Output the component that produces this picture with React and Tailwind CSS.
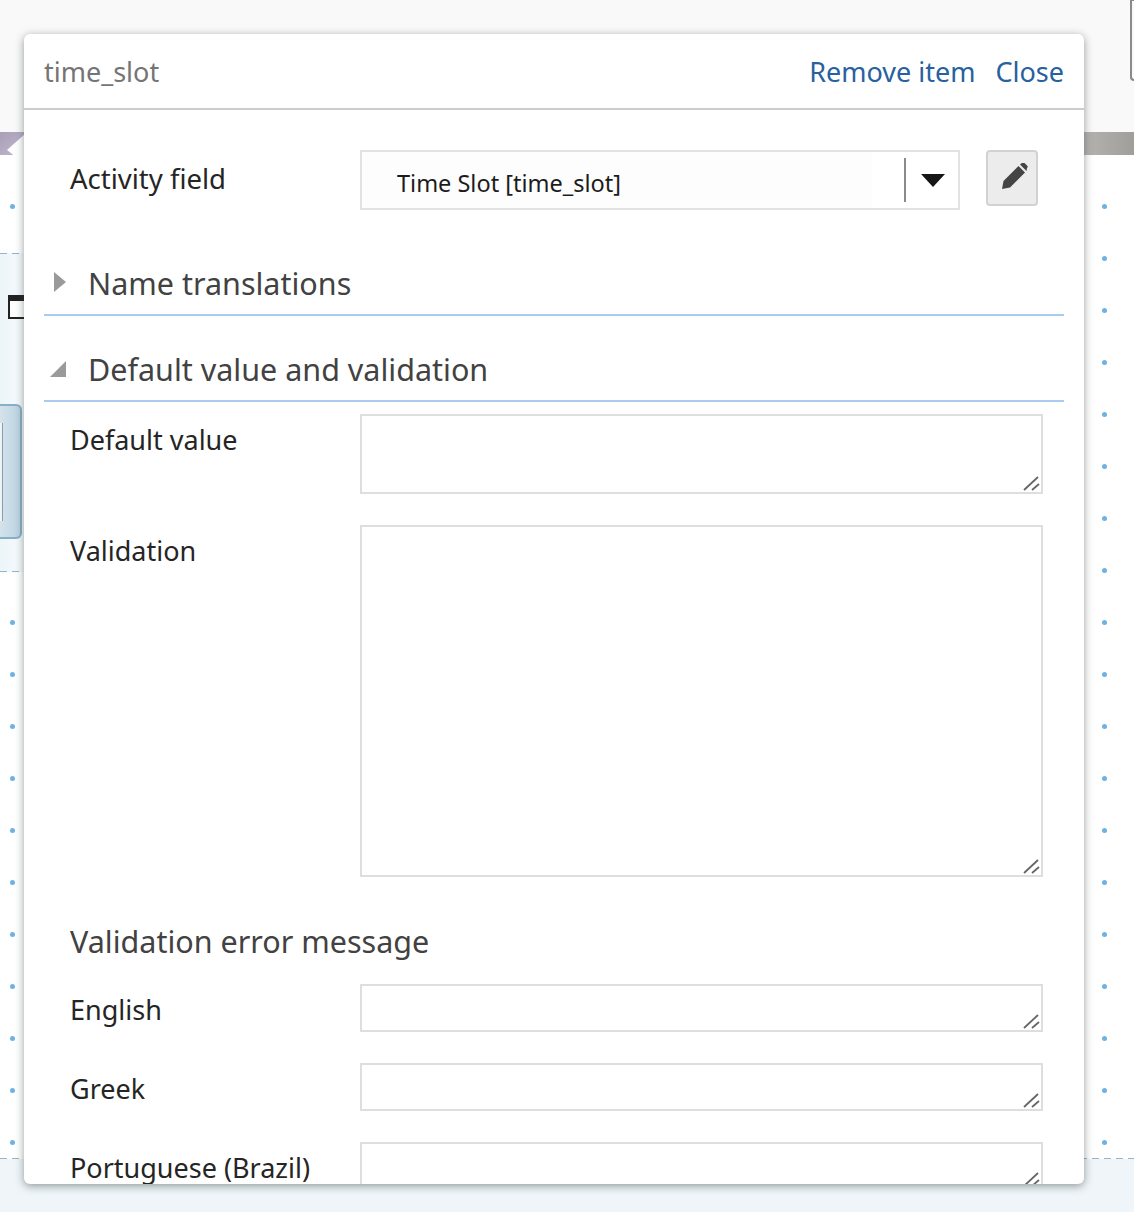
import React from 'react';

const font = "font-['Noto_Sans',sans-serif]";
const dash = 'h-[1px] bg-[repeating-linear-gradient(90deg,#8fb6cc_0_7px,transparent_7px_12px)]';
const dotRows = Array.from({ length: 19 }, (_, i) => i);

const Grip = () => (
  <svg className="absolute right-[1px] bottom-[1px] pointer-events-none" width="18" height="18" viewBox="0 0 18 18">
    <path d="M2 17 L16 4" stroke="#666" strokeWidth="1.8" />
    <path d="M10 17 L17 11" stroke="#666" strokeWidth="1.8" />
  </svg>
);

const Area = ({ className }) => (
  <div className={`relative w-[683px] shrink-0 border-2 border-[#dedede] bg-white ${className}`}>
    <textarea className="block w-full h-full resize-none outline-none" readOnly />
    <Grip />
  </div>
);

const Row = ({ label, boxClass, labelClass, className }) => (
  <div className={`flex items-start pl-[46px] ${className}`}>
    <div className={`w-[290px] shrink-0 text-[27px] leading-[40px] text-[#252525] ${labelClass}`}>{label}</div>
    <Area className={boxClass} />
  </div>
);

const Section = ({ title, open, className }) => (
  <div className={`relative flex items-center h-[60px] pl-[44px] pb-[4px] border-b-2 border-[#a8cbee] ${className}`}>
    {open ? (
      <svg className="absolute left-[6px] top-[19px]" width="16" height="16" viewBox="0 0 16 16">
        <path d="M0 16 L16 16 L16 0 Z" fill="#9a9a9a" />
      </svg>
    ) : (
      <svg className="absolute left-[10px] top-[16px]" width="12" height="20" viewBox="0 0 12 20">
        <path d="M0 0 L12 10 L0 20 Z" fill="#9a9a9a" />
      </svg>
    )}
    <span className="text-[30.5px] leading-[40px] text-[#424242]">{title}</span>
  </div>
);

const Dots = ({ rows, className }) => (
  <div className={`absolute ${className}`}>
    {rows.map((i) => (
      <div key={i} className="h-[52px]">
        <div className="w-[5px] h-[5px] rounded-full bg-[#6fb2e0]" />
      </div>
    ))}
  </div>
);

export default function App() {
  return (
    <div className={`relative w-[1134px] h-[1212px] overflow-hidden bg-white ${font}`}>
      {/* page behind the popup */}
      <div className="flex flex-col h-full">
        <div className="h-[132px] bg-[#f9f9f9] flex justify-end">
          <div className="w-[4px] h-[82px] mt-[-1px] border-2 border-r-0 border-[#8a8a8a] rounded-bl-[6px]" />
        </div>
        <div className="h-[23px] flex justify-between">
          <div className="w-[24px] bg-gradient-to-br from-[#a7a0b4] to-[#c4b8d4]" />
          <div className="w-[50px] bg-gradient-to-r from-[#b5b3b0] to-[#a09e9b]" />
        </div>
        <div className="h-[98px]" />
        <div className="h-[319px] w-[24px] flex flex-col bg-gradient-to-r from-[#edf5fa] to-[#f6fafc]">
          <div className={dash} />
          <div className="ml-[8px] mt-[41px] w-[18px] h-[24px] border-2 border-t-[6px] border-[#222] bg-white" />
          <div className="mt-[85px] w-[22px] h-[135px] rounded-r-[6px] border-2 border-l-0 border-[#86afc8] bg-gradient-to-r from-[#d3e3ec] to-[#bcd3e0] flex items-center">
            <div className="w-[3px] h-[98px] border-r border-[#8a9ba8] bg-[#eef3f6]" />
          </div>
          <div className={`mt-auto ${dash}`} />
        </div>
        <div className="h-[586px]" />
        <div className={dash} />
        <div className="flex-1 bg-[#eff5f8]" />
      </div>

      {/* dot grid along both edges */}
      <Dots rows={dotRows.slice(0, 1)} className="left-[10px] top-[204px]" />
      <Dots rows={dotRows.slice(8)} className="left-[10px] top-[620px]" />
      <Dots rows={dotRows} className="left-[1102px] top-[204px]" />

      {/* arrow of the popup */}
      <svg className="absolute left-[7px] top-[134px]" width="18" height="30" viewBox="0 0 18 30">
        <path d="M0 16 L18 0 L18 30 Z" fill="#ffffff" />
      </svg>

      {/* popup */}
      <div className="absolute left-[24px] top-[34px] w-[1060px] h-[1150px] bg-white rounded-[6px] overflow-hidden shadow-[0_2px_8px_rgba(50,60,60,0.5)]">
        <div className="flex items-center justify-between h-[76px] px-[20px] pt-[2px] border-b-2 border-[#cccccc]">
          <span className="text-[27px] text-[#757575]">time_slot</span>
          <div className="flex gap-[20px] text-[27px] text-[#28619f]">
            <span>Remove item</span>
            <span>Close</span>
          </div>
        </div>

        <div className="flex items-start pl-[46px] pt-[40px]">
          <div className="w-[290px] shrink-0 pt-[9px] text-[27.5px] leading-[40px] text-[#252525]">Activity field</div>
          <div className="flex items-center w-[600px] h-[60px] border-2 border-[#e2e2e2] bg-white">
            <div className="w-[542px] h-full flex items-center">
              <div className="w-[510px] h-full flex items-center pl-[35px] pt-[8px] bg-[#fdfdfd] text-[23.5px] text-[#1c1c1c]">Time Slot [time_slot]</div>
            </div>
            <div className="w-[2px] h-[44px] bg-[#8a8a8a]" />
            <svg className="ml-[15px]" width="24" height="13" viewBox="0 0 24 13">
              <path d="M0 0 L24 0 L12 13 Z" fill="#161616" />
            </svg>
          </div>
          <div className="ml-[26px] w-[52px] h-[56px] flex items-center justify-center rounded-[4px] border-2 border-[#d2d2d2] bg-[#ececec]">
            <svg width="32" height="30" viewBox="0 0 32 30">
              <path d="M6 26 L7.5 18 L22.5 3 L29 9.5 L14 24.5 Z" fill="#444" />
              <path d="M24 1.5 L26.5 -0.5 Q27.5 -1 28.5 0 L31.5 3 Q32 4 31 5 L30.5 8 Z" fill="#444" />
            </svg>
          </div>
        </div>

        <div className="px-[20px] pt-[46px]">
          <Section title="Name translations" />
          <Section title="Default value and validation" open className="mt-[26px]" />
        </div>

        <Row label="Default value" boxClass="h-[80px]" labelClass="pt-[6px]" className="mt-[12px]" />
        <Row label="Validation" boxClass="h-[352px]" labelClass="pt-[6px]" className="mt-[31px]" />

        <div className="pl-[46px] mt-[44px] text-[30.5px] leading-[40px] text-[#424242]">Validation error message</div>

        <Row label="English" boxClass="h-[48px]" labelClass="pt-[6px]" className="mt-[23px]" />
        <Row label="Greek" boxClass="h-[48px]" labelClass="pt-[6px]" className="mt-[31px]" />
        <Row label="Portuguese (Brazil)" boxClass="h-[48px]" labelClass="pt-[6px]" className="mt-[31px]" />
      </div>
    </div>
  );
}
